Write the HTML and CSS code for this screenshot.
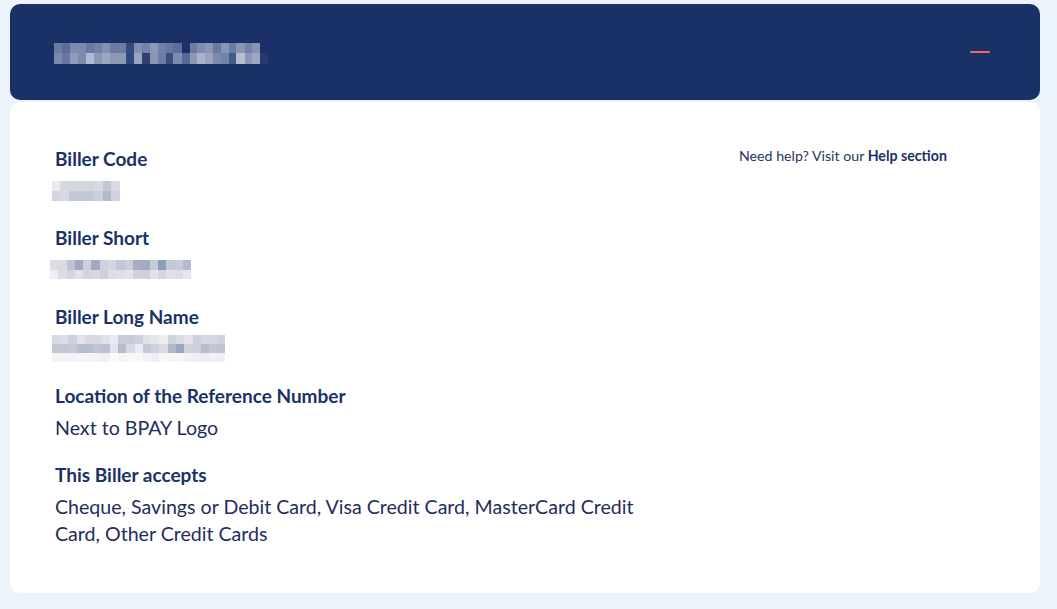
FILE: index.html
```html
<!DOCTYPE html>
<html lang="en">
<head>
<meta charset="utf-8">
<title>Biller details</title>
<link rel="stylesheet" href="styles.css">
</head>
<body>
<div class="page">
  <header class="panel-head">
    <svg class="blur blur-title" width="214" height="21" viewBox="0 0 214 21" aria-hidden="true">
      <g shape-rendering="crispEdges">
        <rect x="0" y="0" width="8" height="10" fill="#6a7aa3"/><rect x="8" y="0" width="8" height="10" fill="#5d6d99"/><rect x="16" y="0" width="16" height="10" fill="#7d8aae"/><rect x="32" y="0" width="8" height="10" fill="#6878a2"/><rect x="40" y="0" width="8" height="10" fill="#7281a8"/><rect x="48" y="0" width="8" height="10" fill="#858fb0"/><rect x="56" y="0" width="16" height="10" fill="#6c7aa2"/><rect x="72" y="0" width="8" height="10" fill="#34497c"/><rect x="80" y="0" width="8" height="10" fill="#8390b2"/><rect x="88" y="0" width="8" height="10" fill="#7684aa"/><rect x="96" y="0" width="8" height="10" fill="#8d98b7"/><rect x="104" y="0" width="8" height="10" fill="#7380a7"/><rect x="112" y="0" width="7" height="10" fill="#6a77a0"/><rect x="119" y="0" width="9" height="10" fill="#5c6d9a"/><rect x="136" y="0" width="7" height="10" fill="#6c7ca5"/><rect x="143" y="0" width="8" height="10" fill="#7e8bae"/><rect x="151" y="0" width="8" height="10" fill="#8b96b6"/><rect x="159" y="0" width="8" height="10" fill="#6a78a1"/><rect x="167" y="0" width="8" height="10" fill="#8796b8"/><rect x="175" y="0" width="7" height="10" fill="#6c7ba3"/><rect x="182" y="0" width="9" height="10" fill="#8a94b3"/><rect x="191" y="0" width="7" height="10" fill="#7482a8"/><rect x="198" y="0" width="8" height="10" fill="#8893b4"/>
        <rect x="0" y="10" width="8" height="11" fill="#7b89ad"/><rect x="8" y="10" width="8" height="11" fill="#6877a0"/><rect x="16" y="10" width="8" height="11" fill="#909bb9"/><rect x="24" y="10" width="8" height="11" fill="#7d8aae"/><rect x="32" y="10" width="8" height="11" fill="#b0bad0"/><rect x="40" y="10" width="8" height="11" fill="#8a97b7"/><rect x="48" y="10" width="8" height="11" fill="#9ca6c1"/><rect x="56" y="10" width="16" height="11" fill="#8d98b7"/><rect x="72" y="10" width="8" height="11" fill="#2f4a80"/><rect x="80" y="10" width="8" height="11" fill="#9aa4c0"/><rect x="88" y="10" width="8" height="11" fill="#2f3f70"/><rect x="96" y="10" width="8" height="11" fill="#8a95b5"/><rect x="104" y="10" width="8" height="11" fill="#6a7fa8"/><rect x="112" y="10" width="7" height="11" fill="#404d78"/><rect x="119" y="10" width="9" height="11" fill="#7d8db0"/><rect x="128" y="10" width="8" height="11" fill="#5a6994"/><rect x="136" y="10" width="7" height="11" fill="#8a98b8"/><rect x="143" y="10" width="8" height="11" fill="#aab3cb"/><rect x="151" y="10" width="8" height="11" fill="#9aa3bf"/><rect x="159" y="10" width="8" height="11" fill="#7d89ad"/><rect x="167" y="10" width="8" height="11" fill="#7083a9"/><rect x="175" y="10" width="7" height="11" fill="#465a8a"/><rect x="182" y="10" width="9" height="11" fill="#b9bdd0"/><rect x="191" y="10" width="7" height="11" fill="#8b96b6"/><rect x="198" y="10" width="8" height="11" fill="#9ca7c2"/><rect x="206" y="10" width="8" height="11" fill="#283a6c"/>
      </g>
    </svg>
    <button class="toggle" type="button" aria-label="Collapse"><span class="minus"></span></button>
  </header>

  <section class="panel-body">
    <div class="fields">
      <div class="field">
        <div class="label">Biller Code</div>
        <div class="value value-blur">
          <svg class="blur" width="68" height="20" viewBox="0 0 68 20" aria-hidden="true">
            <g shape-rendering="crispEdges">
              <rect x="0" y="0" width="8" height="10" fill="#e9e9ee"/><rect x="8" y="0" width="9" height="10" fill="#d6d8e1"/><rect x="17" y="0" width="25" height="10" fill="#d3d5df"/><rect x="42" y="0" width="9" height="10" fill="#d8dae2"/><rect x="51" y="0" width="8" height="10" fill="#c3c6d4"/><rect x="59" y="0" width="9" height="10" fill="#d9dbe4"/>
              <rect x="0" y="10" width="8" height="10" fill="#d4d5de"/><rect x="8" y="10" width="9" height="10" fill="#d8d9e1"/><rect x="17" y="10" width="25" height="10" fill="#c4c7d5"/><rect x="42" y="10" width="9" height="10" fill="#cdd0dc"/><rect x="51" y="10" width="8" height="10" fill="#b4b8cb"/><rect x="59" y="10" width="9" height="10" fill="#d1d4df"/>
            </g>
          </svg>
        </div>
      </div>
      <div class="field">
        <div class="label">Biller Short</div>
        <div class="value value-blur shift-left">
          <svg class="blur" width="141" height="19" viewBox="0 0 141 19" aria-hidden="true">
            <g shape-rendering="crispEdges">
              <rect x="0" y="0" width="8" height="10" fill="#dcdde5"/><rect x="8" y="0" width="9" height="10" fill="#d6dbe4"/><rect x="17" y="0" width="8" height="10" fill="#bec2d1"/><rect x="25" y="0" width="8" height="10" fill="#a3a8bf"/><rect x="33" y="0" width="8" height="10" fill="#ced1dd"/><rect x="41" y="0" width="9" height="10" fill="#a3a8c0"/><rect x="50" y="0" width="8" height="10" fill="#cdd1dd"/><rect x="58" y="0" width="8" height="10" fill="#d3d5df"/><rect x="66" y="0" width="9" height="10" fill="#c2c5d3"/><rect x="75" y="0" width="8" height="10" fill="#cccfdb"/><rect x="83" y="0" width="8" height="10" fill="#a8adc3"/><rect x="91" y="0" width="9" height="10" fill="#a0abc4"/><rect x="100" y="0" width="8" height="10" fill="#c8cad6"/><rect x="108" y="0" width="8" height="10" fill="#8d9cba"/><rect x="116" y="0" width="9" height="10" fill="#c3c6d4"/><rect x="125" y="0" width="8" height="10" fill="#c7cad7"/><rect x="133" y="0" width="8" height="10" fill="#b2bbd0"/>
              <rect x="0" y="10" width="8" height="9" fill="#efeff3"/><rect x="8" y="10" width="9" height="9" fill="#d8dde7"/><rect x="17" y="10" width="8" height="9" fill="#d3d5df"/><rect x="25" y="10" width="8" height="9" fill="#e0e1e9"/><rect x="33" y="10" width="8" height="9" fill="#d2d4df"/><rect x="41" y="10" width="9" height="9" fill="#d7d9e2"/><rect x="50" y="10" width="8" height="9" fill="#cdd0dc"/><rect x="58" y="10" width="8" height="9" fill="#dcdde6"/><rect x="66" y="10" width="9" height="9" fill="#dedfe7"/><rect x="75" y="10" width="8" height="9" fill="#e3e4ea"/><rect x="83" y="10" width="8" height="9" fill="#cfd2de"/><rect x="91" y="10" width="9" height="9" fill="#cbd0dd"/><rect x="100" y="10" width="8" height="9" fill="#e1e2e9"/><rect x="108" y="10" width="8" height="9" fill="#d1d6e2"/><rect x="116" y="10" width="9" height="9" fill="#dfe0e8"/><rect x="125" y="10" width="8" height="9" fill="#dcdee6"/><rect x="133" y="10" width="8" height="9" fill="#e6e7ed"/>
            </g>
          </svg>
        </div>
      </div>
      <div class="field">
        <div class="label">Biller Long Name</div>
        <div class="value value-blur">
          <svg class="blur" width="173" height="27" viewBox="0 0 173 27" aria-hidden="true">
            <g shape-rendering="crispEdges">
              <rect x="0" y="0" width="8" height="9" fill="#d8d9e2"/><rect x="8" y="0" width="8" height="9" fill="#dcdde5"/><rect x="16" y="0" width="9" height="9" fill="#cdd1dd"/><rect x="25" y="0" width="8" height="9" fill="#e2e3ea"/><rect x="33" y="0" width="8" height="9" fill="#d9d9e1"/><rect x="41" y="0" width="8" height="9" fill="#d8dae3"/><rect x="49" y="0" width="9" height="9" fill="#e0e1e9"/><rect x="58" y="0" width="8" height="9" fill="#e7ebf2"/><rect x="66" y="0" width="8" height="9" fill="#c9cbd8"/><rect x="74" y="0" width="9" height="9" fill="#c7cbd8"/><rect x="83" y="0" width="8" height="9" fill="#ccd0dc"/><rect x="91" y="0" width="8" height="9" fill="#e0e2ea"/><rect x="99" y="0" width="8" height="9" fill="#e6e7ed"/><rect x="107" y="0" width="9" height="9" fill="#eeedf0"/><rect x="116" y="0" width="8" height="9" fill="#cfd3de"/><rect x="124" y="0" width="8" height="9" fill="#dadce4"/><rect x="132" y="0" width="9" height="9" fill="#e3e4ea"/><rect x="141" y="0" width="8" height="9" fill="#ced1dd"/><rect x="149" y="0" width="8" height="9" fill="#d6d8e1"/><rect x="157" y="0" width="8" height="9" fill="#d5d7e1"/><rect x="165" y="0" width="8" height="9" fill="#cfd3de"/>
              <rect x="0" y="9" width="8" height="9" fill="#c4c6d4"/><rect x="8" y="9" width="8" height="9" fill="#c3c6d4"/><rect x="16" y="9" width="9" height="9" fill="#c5c8d5"/><rect x="25" y="9" width="8" height="9" fill="#b8bccd"/><rect x="33" y="9" width="8" height="9" fill="#b5bfcf"/><rect x="41" y="9" width="8" height="9" fill="#c0c4d2"/><rect x="49" y="9" width="9" height="9" fill="#bbbfcf"/><rect x="58" y="9" width="8" height="9" fill="#dfe5ee"/><rect x="66" y="9" width="8" height="9" fill="#b7bbcc"/><rect x="74" y="9" width="9" height="9" fill="#d7d8e1"/><rect x="83" y="9" width="8" height="9" fill="#e7eef5"/><rect x="91" y="9" width="8" height="9" fill="#c4c8d6"/><rect x="99" y="9" width="8" height="9" fill="#cfd2dd"/><rect x="107" y="9" width="9" height="9" fill="#dcdbe1"/><rect x="116" y="9" width="8" height="9" fill="#b1b8cb"/><rect x="124" y="9" width="8" height="9" fill="#9ba6c0"/><rect x="132" y="9" width="9" height="9" fill="#cfd1dc"/><rect x="141" y="9" width="8" height="9" fill="#cdd0dc"/><rect x="149" y="9" width="8" height="9" fill="#b8bccd"/><rect x="157" y="9" width="8" height="9" fill="#c2c6d4"/><rect x="165" y="9" width="8" height="9" fill="#bfc4d3"/>
              <rect x="0" y="18" width="8" height="9" fill="#f3f3f6"/><rect x="8" y="18" width="8" height="9" fill="#f4f4f7"/><rect x="16" y="18" width="9" height="9" fill="#f1f2f5"/><rect x="25" y="18" width="8" height="9" fill="#f4f5f8"/><rect x="33" y="18" width="8" height="9" fill="#f5f5f8"/><rect x="41" y="18" width="8" height="9" fill="#f3f3f6"/><rect x="49" y="18" width="9" height="9" fill="#eff0f4"/><rect x="58" y="18" width="8" height="9" fill="#fbfbfc"/><rect x="66" y="18" width="8" height="9" fill="#f5f5f8"/><rect x="74" y="18" width="9" height="9" fill="#f7f7f9"/><rect x="83" y="18" width="8" height="9" fill="#f7f8fa"/><rect x="91" y="18" width="8" height="9" fill="#f2f3f6"/><rect x="99" y="18" width="8" height="9" fill="#eeeff3"/><rect x="107" y="18" width="9" height="9" fill="#f7f7f9"/><rect x="116" y="18" width="8" height="9" fill="#f6f6f8"/><rect x="124" y="18" width="8" height="9" fill="#f6f6f9"/><rect x="132" y="18" width="9" height="9" fill="#f2f2f5"/><rect x="141" y="18" width="8" height="9" fill="#eeeef2"/><rect x="149" y="18" width="8" height="9" fill="#ededf1"/><rect x="157" y="18" width="8" height="9" fill="#f1f1f5"/><rect x="165" y="18" width="8" height="9" fill="#f0f0f4"/>
            </g>
          </svg>
        </div>
      </div>
      <div class="field">
        <div class="label">Location of the Reference Number</div>
        <div class="value">Next to BPAY Logo</div>
      </div>
      <div class="field">
        <div class="label">This Biller accepts</div>
        <div class="value">Cheque, Savings or Debit Card, Visa Credit Card, MasterCard Credit Card, Other Credit Cards</div>
      </div>
    </div>
    <aside class="help">Need help? Visit our <a class="help-link" href="#">Help section</a></aside>
  </section>
</div>
</body>
</html>
```
FILE: styles.css
```css
* { box-sizing: border-box; }

html, body {
  margin: 0;
  background: #edf3fa;
}

body {
  font-family: Lato, "Liberation Sans", sans-serif;
  color: #1b2c5e;
}

.page {
  padding: 4px 17px 0 10px;
  display: flex;
  flex-direction: column;
  gap: 2px;
}

.panel-head {
  height: 96px;
  background: #1a3168;
  border-radius: 10px;
  display: flex;
  align-items: center;
  justify-content: space-between;
  padding: 0 50px 0 44px;
}

.blur { display: block; }

.blur-title { margin-top: 2px; }

.toggle {
  background: none;
  border: 0;
  padding: 0;
  width: 20px;
  height: 20px;
  display: flex;
  align-items: center;
  justify-content: center;
  cursor: pointer;
}

.minus {
  display: block;
  width: 20px;
  height: 2.5px;
  background: #f0675b;
  border-radius: 1px;
}

.panel-body {
  background: #ffffff;
  border-radius: 10px;
  height: 491px;
  padding: 45px 45px 0 45px;
  display: flex;
  align-items: flex-start;
}

.fields {
  flex: 0 0 684px;
  display: flex;
  flex-direction: column;
  gap: 22px;
}

.field {
  display: flex;
  flex-direction: column;
  gap: 6px;
  max-width: 625px;
}

.label {
  font-size: 19px;
  line-height: 24px;
  font-weight: 700;
  color: #1a3168;
}

.value {
  font-size: 19.6px;
  line-height: 27px;
  color: #1f2d5c;
}

.value-blur {
  height: 27px;
  display: flex;
  align-items: center;
  margin-left: -3px;
}

.value-blur.shift-left { margin-left: -5px; }

.help {
  margin-top: -1px;
  font-size: 14.2px;
  line-height: 20px;
  color: #2a3461;
}

.help-link {
  color: #1a3168;
  font-weight: 700;
  text-decoration: none;
}
```
